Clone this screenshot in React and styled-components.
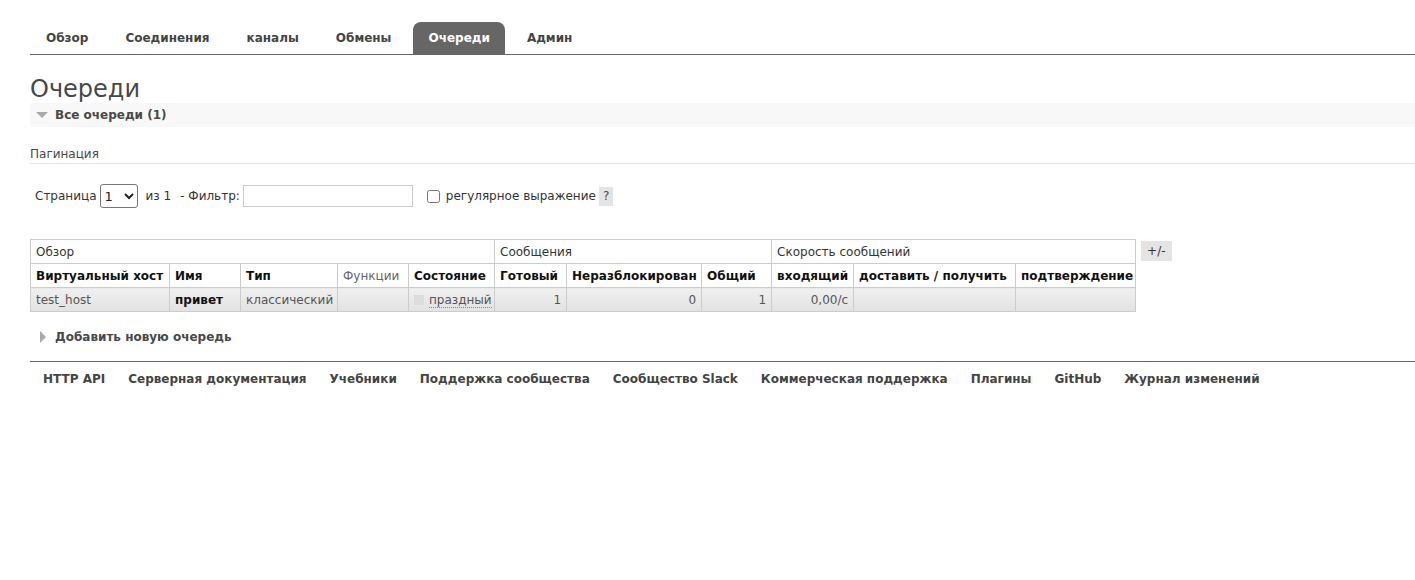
import styled, { createGlobalStyle } from "styled-components"

const GlobalStyle = createGlobalStyle`
   body {
      margin: 0;
      background: #fff;
      color: #484848;
      font: 12px "DejaVu Sans", Verdana, sans-serif;
   }
`

const tabs = ["Обзор", "Соединения", "каналы", "Обмены", "Очереди", "Админ"]
const footerLinks = [
   "HTTP API", "Серверная документация", "Учебники", "Поддержка сообщества",
   "Сообщество Slack", "Коммерческая поддержка", "Плагины", "GitHub", "Журнал изменений",
]
const colWidths = [139, 71, 97, 71, 86, 72, 135, 70, 82, 162, 120]

function App() {
   return (
      <Page>
         <GlobalStyle />
         <Menu>
            {tabs.map((t) => (
               <Tab key={t} $active={t === "Очереди"}>{t}</Tab>
            ))}
         </Menu>

         <Title>Очереди</Title>
         <SectionBar>
            <TriangleDown />
            Все очереди (1)
         </SectionBar>

         <Pagination>Пагинация</Pagination>
         <FilterRow>
            <span>Страница</span>
            <PageSelect defaultValue="1">
               <option value="1">1</option>
            </PageSelect>
            <Of>из 1</Of>
            <span>- Фильтр:</span>
            <FilterInput type="text" />
            <RegexLabel>
               <input type="checkbox" />
               регулярное выражение
            </RegexLabel>
            <Help>?</Help>
         </FilterRow>

         <TableWrap>
            <List>
               <colgroup>
                  {colWidths.map((w, i) => (<col key={i} style={{ width: w }} />))}
               </colgroup>
               <thead>
                  <tr>
                     <GroupTh colSpan={5}>Обзор</GroupTh>
                     <GroupTh colSpan={3}>Сообщения</GroupTh>
                     <GroupTh colSpan={3}>Скорость сообщений</GroupTh>
                  </tr>
                  <tr>
                     <Th>Виртуальный хост</Th>
                     <Th>Имя</Th>
                     <Th>Тип</Th>
                     <Th $plain>Функции</Th>
                     <Th>Состояние</Th>
                     <Th>Готовый</Th>
                     <Th>Неразблокирован</Th>
                     <Th>Общий</Th>
                     <Th>входящий</Th>
                     <Th>доставить / получить</Th>
                     <Th>подтверждение</Th>
                  </tr>
               </thead>
               <tbody>
                  <tr>
                     <Td>test_host</Td>
                     <Td $bold>привет</Td>
                     <Td>классический</Td>
                     <Td />
                     <Td>
                        <StateBox />
                        <Abbr>праздный</Abbr>
                     </Td>
                     <Td $right>1</Td>
                     <Td $right>0</Td>
                     <Td $right>1</Td>
                     <Td $right>0,00/с</Td>
                     <Td />
                     <Td />
                  </tr>
               </tbody>
            </List>
            <Toggle>+/-</Toggle>
         </TableWrap>

         <AddQueue>
            <TriangleRight />
            Добавить новую очередь
         </AddQueue>

         <Footer>
            {footerLinks.map((l) => (<FooterLink key={l}>{l}</FooterLink>))}
         </Footer>
      </Page>
   )
}

export default App

const Page = styled.div`
   padding: 22px 0 40px 30px;
`

const Menu = styled.nav`
   display: flex;
   border-bottom: 1px solid #666;
   padding-left: 1px;
`

const Tab = styled.a`
   display: block;
   height: 32px;
   line-height: 32px;
   padding: 0 15px;
   margin-right: 7px;
   font-weight: bold;
   color: ${(p) => (p.$active ? "#fff" : "#444")};
   background: ${(p) => (p.$active ? "#666" : "transparent")};
   border-radius: 8px 8px 0 0;
   cursor: pointer;
`

const Title = styled.h1`
   margin: 20px 0 0;
   font-size: 24px;
   line-height: 28px;
   font-weight: normal;
   color: #484848;
`

const SectionBar = styled.h2`
   display: flex;
   align-items: center;
   margin: 0;
   height: 24px;
   background: #f8f8f8;
   font-size: 12px;
   font-weight: bold;
   color: #484848;
   padding-left: 6px;
`

const TriangleDown = styled.span`
   width: 0;
   height: 0;
   border-left: 6px solid transparent;
   border-right: 6px solid transparent;
   border-top: 6px solid #aaa;
   margin-right: 7px;
`

const TriangleRight = styled.span`
   width: 0;
   height: 0;
   border-top: 6px solid transparent;
   border-bottom: 6px solid transparent;
   border-left: 6px solid #aaa;
   margin-right: 9px;
`

const Pagination = styled.h3`
   margin: 20px 0 0;
   font-size: 12px;
   font-weight: normal;
   line-height: 14px;
   padding-bottom: 2px;
   border-bottom: 1px solid #e4e4e4;
`

const FilterRow = styled.div`
   display: flex;
   align-items: center;
   margin-top: 20px;
   padding-left: 5px;
   height: 24px;
   color: #333;
`

const PageSelect = styled.select`
   width: 38px;
   height: 24px;
   margin: 0 8px 0 3px;
   font: 13px "DejaVu Sans", Verdana, sans-serif;
   color: #222;
   border: 1px solid #767676;
   border-radius: 3px;
   background: #fff;
`

const Of = styled.span`
   margin-right: 9px;
`

const FilterInput = styled.input`
   width: 170px;
   height: 22px;
   box-sizing: border-box;
   margin-left: 3px;
   border: 1px solid #ccc;
`

const RegexLabel = styled.label`
   display: flex;
   align-items: center;
   margin-left: 14px;
   gap: 6px;
   input {
      margin: 0;
      width: 13px;
      height: 13px;
   }
`

const Help = styled.span`
   display: inline-block;
   margin-left: 3px;
   padding: 0 4px;
   height: 19px;
   line-height: 19px;
   background: #e4e4e4;
   color: #484848;
`

const TableWrap = styled.div`
   display: flex;
   align-items: flex-start;
   gap: 5px;
   margin-top: 31px;
`

const List = styled.table`
   table-layout: fixed;
   border-collapse: collapse;
   width: 1105px;
   border: 1px solid #ccc;
`

const GroupTh = styled.th`
   height: 23px;
   padding: 0 5px;
   text-align: left;
   font-weight: normal;
   border: 1px solid #ccc;
   color: #333;
   white-space: nowrap;
`

const Th = styled.th`
   height: 23px;
   padding: 0 5px;
   text-align: left;
   font-weight: ${(p) => (p.$plain ? "normal" : "bold")};
   color: ${(p) => (p.$plain ? "#666" : "#111")};
   border: 1px solid #ccc;
   white-space: nowrap;
   overflow: hidden;
`

const Td = styled.td`
   height: 23px;
   padding: 0 5px;
   text-align: ${(p) => (p.$right ? "right" : "left")};
   font-weight: ${(p) => (p.$bold ? "bold" : "normal")};
   color: ${(p) => (p.$bold ? "#111" : "#555")};
   background: linear-gradient(#f0f0f0, #e2e2e2);
   border: 1px solid #ccc;
   white-space: nowrap;
`

const StateBox = styled.span`
   display: inline-block;
   width: 10px;
   height: 10px;
   background: #ddd;
   margin-right: 5px;
   vertical-align: -1px;
`

const Abbr = styled.abbr`
   text-decoration: none;
   border-bottom: 1px dotted #888;
   color: #555;
`

const Toggle = styled.span`
   margin-top: 2px;
   padding: 0 6px;
   height: 20px;
   line-height: 20px;
   background: #e4e4e4;
   color: #333;
`

const AddQueue = styled.h2`
   display: flex;
   align-items: center;
   margin: 13px 0 0;
   height: 24px;
   padding-left: 10px;
   font-size: 12px;
   font-weight: bold;
   color: #484848;
`

const Footer = styled.div`
   display: flex;
   gap: 23px;
   margin-top: 12px;
   padding: 10px 0 0 13px;
   border-top: 1px solid #666;
`

const FooterLink = styled.a`
   font-weight: bold;
   color: #444;
   line-height: 14px;
   cursor: pointer;
`
